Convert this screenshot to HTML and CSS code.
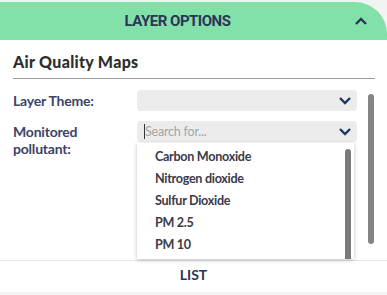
FILE: index.html
```html
<!DOCTYPE html>
<html lang="en">
<head>
  <meta charset="UTF-8">
  <title>Layer Options</title>
  <link rel="stylesheet" href="styles.css">
</head>
<body>
  <div class="panel">
    <div class="panel-header">
      <span class="panel-title">LAYER OPTIONS</span>
      <svg class="collapse-icon" width="14" height="10" viewBox="0 0 14 10">
        <path d="M2 8 L7 3 L12 8" fill="none" stroke="#2b3558" stroke-width="2.4"/>
      </svg>
    </div>

    <div class="panel-body">
      <h3 class="section-title">Air Quality Maps</h3>

      <div class="field-row">
        <label class="field-label">Layer Theme:</label>
        <div class="select-box">
          <span class="select-value"></span>
          <svg class="chevron" width="14" height="10" viewBox="0 0 14 10">
            <path d="M2 2 L7 7 L12 2" fill="none" stroke="#1f3668" stroke-width="2.4"/>
          </svg>
        </div>
      </div>

      <div class="field-row">
        <label class="field-label">Monitored<br>pollutant:</label>
        <div class="select-wrap">
          <div class="select-box">
            <span class="caret"></span><span class="placeholder">Search for...</span>
            <svg class="chevron" width="14" height="10" viewBox="0 0 14 10">
              <path d="M2 2 L7 7 L12 2" fill="none" stroke="#1f3668" stroke-width="2.4"/>
            </svg>
          </div>
          <div class="dropdown">
            <ul class="options">
              <li>Carbon Monoxide</li>
              <li>Nitrogen dioxide</li>
              <li>Sulfur Dioxide</li>
              <li>PM 2.5</li>
              <li>PM 10</li>
            </ul>
            <div class="inner-scroll"></div>
          </div>
        </div>
      </div>

      <div class="outer-scroll"></div>
    </div>

    <div class="panel-footer">LIST</div>
  </div>
</body>
</html>
```

FILE: styles.css
```css
body {
  margin: 0;
  padding: 0;
  font-family: 'Lato', sans-serif;
  background-color: #f3f3f3;
}

.panel {
  margin-top: 2px;
  width: 387px;
  background-color: #fff;
  border-top-right-radius: 32px;
  overflow: hidden;
}

.panel-header {
  height: 38px;
  background-color: #82e1a9;
  display: flex;
  align-items: center;
  position: relative;
}

.panel-title {
  flex: 1;
  text-align: center;
  padding-right: 32px;
  font-family: 'Roboto', sans-serif;
  font-size: 15px;
  font-weight: bold;
  color: #2b3558;
  letter-spacing: -0.5px;
}

.collapse-icon {
  position: absolute;
  right: 19px;
  top: 14px;
}

.panel-body {
  position: relative;
  height: 220px;
  padding: 0 12px 0 13px;
}

.section-title {
  margin: 0;
  padding: 12px 0 7px;
  font-size: 16px;
  font-weight: 900;
  color: #2e2e2e;
  border-bottom: 1px solid #9a9a9a;
  letter-spacing: 0.3px;
}

.field-row {
  display: flex;
  align-items: flex-start;
  margin-top: 11px;
}

.field-row + .field-row {
  margin-top: 10px;
}

.field-label {
  width: 124px;
  font-size: 14px;
  font-weight: bold;
  color: #3b4468;
  line-height: 17px;
  padding-top: 2px;
  letter-spacing: -0.2px;
}

.select-wrap {
  width: 220px;
}

.select-box {
  width: 220px;
  height: 21px;
  background-color: #ececec;
  border-radius: 4px;
  display: flex;
  align-items: center;
  position: relative;
}

.chevron {
  position: absolute;
  right: 5px;
  top: 6px;
}

.caret {
  width: 1px;
  height: 15px;
  background-color: #333;
  margin-left: 7px;
}

.placeholder {
  font-size: 12.5px;
  color: #a5a5a5;
  letter-spacing: -0.2px;
}

.dropdown {
  position: relative;
  width: 217px;
  height: 116px;
  margin-top: 1px;
  background-color: #fff;
  box-shadow: 0 1px 4px rgba(0, 0, 0, 0.25);
  overflow: hidden;
}

.options {
  list-style: none;
  margin: 0;
  padding: 5px 0 0 18px;
}

.options li {
  height: 22px;
  line-height: 18px;
  font-size: 12.6px;
  font-weight: bold;
  color: #3a3a4a;
  letter-spacing: -0.3px;
}

.inner-scroll {
  position: absolute;
  right: 3px;
  top: 6px;
  bottom: 0;
  width: 6px;
  background-color: #7b7b7b;
  border-radius: 3px 3px 0 0;
}

.outer-scroll {
  position: absolute;
  right: 13px;
  top: 54px;
  width: 6px;
  height: 150px;
  background-color: #858585;
  border-radius: 3px;
}

.panel-footer {
  height: 31px;
  border-top: 1px solid #e6e6e6;
  text-align: center;
  line-height: 28px;
  font-size: 14px;
  font-weight: bold;
  color: #2b3558;
}
```
